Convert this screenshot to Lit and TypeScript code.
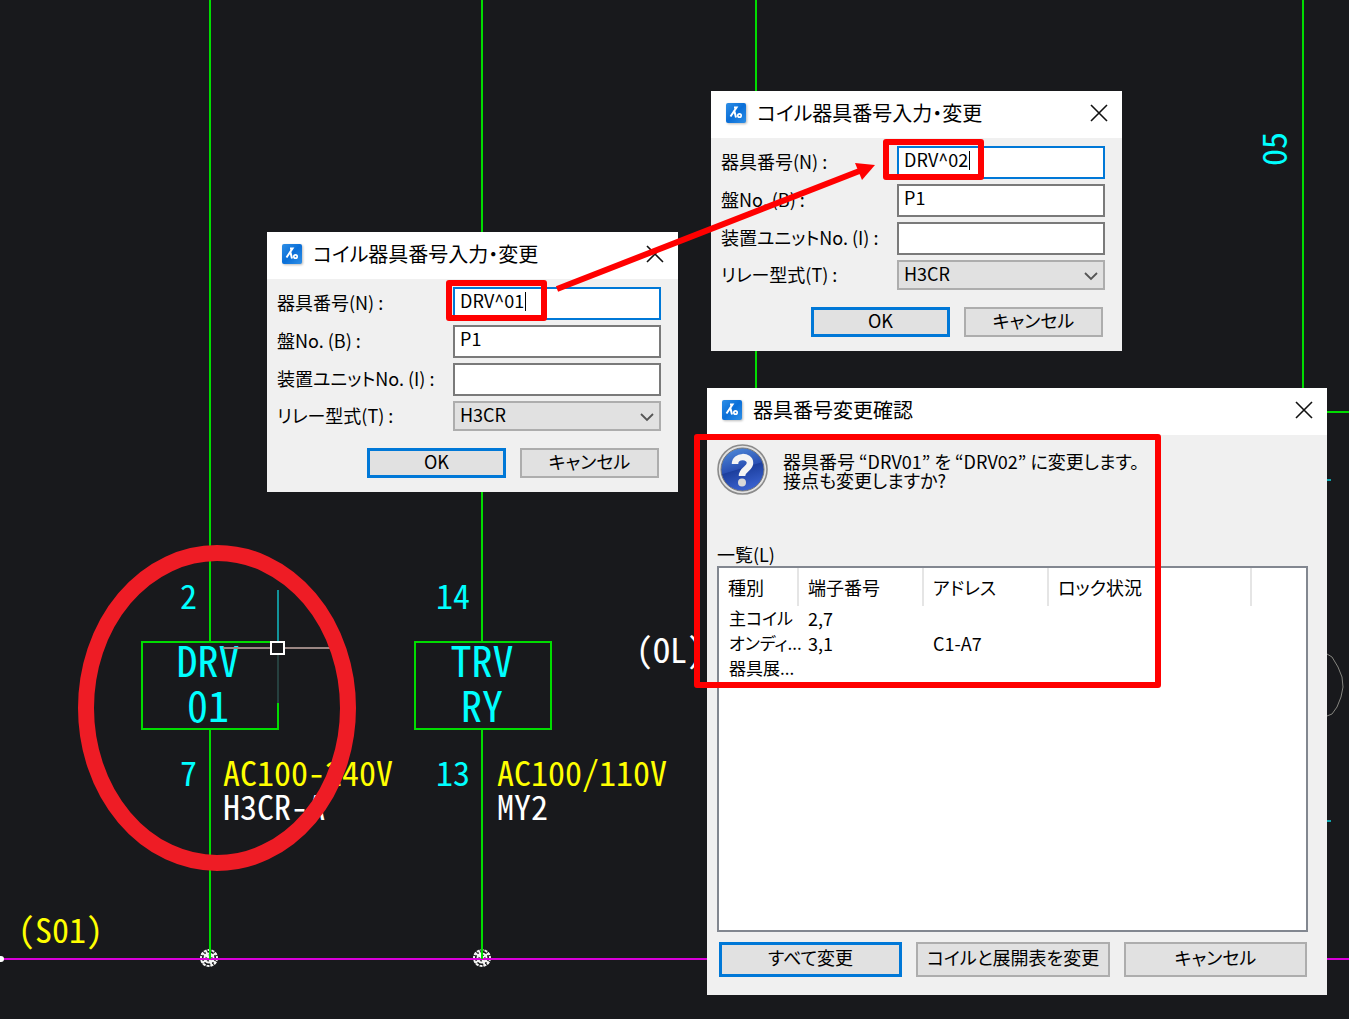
import { LitElement, html, svg, css } from "lit";
import { customElement, property } from "lit/decorators.js";

const FONT = css`"Noto Sans CJK JP", "Liberation Sans", sans-serif`;

const appIcon = html`<svg class="app-icon" viewBox="0 0 20 20" aria-hidden="true">
  <defs>
    <linearGradient id="g" x1="0" y1="0" x2="1" y2="1">
      <stop offset="0" stop-color="#2f8fe6" />
      <stop offset="0.5" stop-color="#0a6fd8" />
      <stop offset="1" stop-color="#2f8fe6" />
    </linearGradient>
  </defs>
  <rect width="20" height="20" rx="2" fill="url(#g)" />
  <path d="M8 4.5 H10.5 L4.5 13.5 M8.5 8.5 L10 14.5" fill="none" stroke="#fff" stroke-width="2" />
  <circle cx="13.5" cy="12.5" r="1.7" fill="none" stroke="#fff" stroke-width="1.7" />
</svg>`;

@customElement("dialog-window")
export class DialogWindow extends LitElement {
  @property() heading = "";

  static styles = css`
    :host {
      display: flex;
      flex-direction: column;
      box-sizing: border-box;
      background: #f0f0f0;
      color: #000;
      font-family: ${FONT};
      font-feature-settings: "palt";
    }
    .title-bar {
      display: flex;
      align-items: center;
      gap: 11px;
      height: 47px;
      flex: none;
      padding: 0 14px 3px 15px;
      box-sizing: border-box;
      background: #fff;
    }
    .app-icon {
      width: 20px;
      height: 20px;
      flex: none;
      filter: drop-shadow(1px 1px 1px #bbb);
    }
    .heading {
      flex: 1;
      margin: 0;
      font-size: 20px;
      font-weight: 400;
      line-height: 28px;
      white-space: nowrap;
    }
    .close {
      display: flex;
      border: 0;
      padding: 0;
      background: none;
    }
    .close svg {
      width: 18px;
      height: 18px;
    }
  `;

  render() {
    return html`
      <header class="title-bar">
        ${appIcon}
        <h2 class="heading">${this.heading}</h2>
        <button class="close" aria-label="閉じる">
          <svg viewBox="0 0 18 18">
            <path d="M1 1 L17 17 M17 1 L1 17" stroke="#111" stroke-width="1.6" />
          </svg>
        </button>
      </header>
      <slot></slot>
    `;
  }
}

const buttonStyles = css`
  .button {
    box-sizing: border-box;
    border: 2px solid #adadad;
    padding: 0 0 5px;
    background: #e1e1e1;
    color: #000;
    font: inherit;
    font-feature-settings: inherit;
    font-size: 18px;
    line-height: 20px;
    white-space: nowrap;
  }
  .button.default {
    border: 3px solid #0078d7;
  }
`;

@customElement("coil-dialog")
export class CoilDialog extends LitElement {
  @property() number = "";

  static styles = [
    buttonStyles,
    css`
      :host {
        display: block;
        font-family: ${FONT};
      }
      .form {
        display: flex;
        flex-direction: column;
        gap: 17px;
        padding: 8px 17px 14px 10px;
      }
      .fields {
        display: grid;
        grid-template-columns: 1fr 208px;
        grid-template-rows: repeat(3, 33px) 30px;
        gap: 5px 0;
        align-items: stretch;
      }
      .label {
        align-self: center;
        padding-bottom: 3px;
        font-size: 18px;
        line-height: 24px;
        white-space: nowrap;
      }
      .field {
        box-sizing: border-box;
        width: 100%;
        min-width: 0;
        border: 2px solid #7a7a7a;
        border-radius: 0;
        padding: 0 5px 7px;
        background: #fff;
        color: #000;
        font: inherit;
        font-feature-settings: inherit;
        font-size: 18px;
        line-height: 22px;
        outline: none;
      }
      .field.active {
        border-color: #0078d7;
      }
      .picker {
        position: relative;
        display: flex;
      }
      .select {
        appearance: none;
        border-color: #adadad;
        padding: 0 5px 4px;
        background: #e1e1e1;
      }
      .chevron {
        position: absolute;
        right: 6px;
        top: 11px;
        width: 16px;
        height: 10px;
        pointer-events: none;
      }
      .actions {
        display: grid;
        grid-template-columns: 139px 139px;
        gap: 14px;
        justify-content: end;
        padding-right: 2px;
      }
      .button {
        height: 30px;
      }
    `,
  ];

  render() {
    return html`
      <dialog-window heading="コイル器具番号入力・変更">
        <form class="form" @submit=${(e: Event) => e.preventDefault()}>
          <div class="fields">
            <label class="label" for="number">器具番号(N) :</label>
            <input class="field active" id="number" .value=${this.number} />
            <label class="label" for="board">盤No. (B) :</label>
            <input class="field" id="board" .value=${"P1"} />
            <label class="label" for="unit">装置ユニットNo. (I) :</label>
            <input class="field" id="unit" />
            <label class="label" for="relay">リレー型式(T) :</label>
            <div class="picker">
              <select class="field select" id="relay">
                <option>H3CR</option>
              </select>
              <svg class="chevron" viewBox="0 0 16 10" aria-hidden="true">
                <path d="M2 2 L8 8 L14 2" fill="none" stroke="#555" stroke-width="1.8" />
              </svg>
            </div>
          </div>
          <div class="actions">
            <button class="button default">OK</button>
            <button class="button" type="button">キャンセル</button>
          </div>
        </form>
      </dialog-window>
    `;
  }
}

const ROWS = [
  ["主コイル", "2,7", "", ""],
  ["オンディ...", "3,1", "C1-A7", ""],
  ["器具展...", "", "", ""],
];

@customElement("confirm-dialog")
export class ConfirmDialog extends LitElement {
  static styles = [
    buttonStyles,
    css`
      :host {
        display: block;
        font-family: ${FONT};
      }
      .body {
        display: flex;
        flex-direction: column;
        padding: 9px 19px 18px 10px;
      }
      .message {
        display: flex;
        gap: 15px;
        height: 98px;
      }
      .question {
        width: 51px;
        height: 51px;
        flex: none;
      }
      .text {
        margin: 0;
        padding-top: 8px;
        font-size: 18px;
        line-height: 19px;
        white-space: nowrap;
      }
      .caption {
        font-size: 18px;
        line-height: 24px;
      }
      .list {
        box-sizing: border-box;
        height: 366px;
        border: 2px solid #828790;
        background: #fff;
      }
      .table {
        width: 100%;
        table-layout: fixed;
        border-collapse: collapse;
        font-size: 18px;
        line-height: 24px;
      }
      .kind {
        width: 79px;
      }
      .terminal,
      .address {
        width: 125px;
      }
      .lock {
        width: 203px;
      }
      .table th {
        height: 38px;
        box-sizing: border-box;
        padding: 0 0 0 9px;
        border-right: 2px solid #e5e5e5;
        font-weight: 400;
        text-align: left;
        white-space: nowrap;
      }
      .table th:last-child {
        border-right: 0;
      }
      .table td {
        height: 25px;
        box-sizing: border-box;
        padding: 0 0 1px 10px;
        white-space: nowrap;
      }
      .table td:first-child {
        font-size: 17px;
      }
      .actions {
        display: grid;
        grid-template-columns: 183fr 194fr 183fr;
        gap: 14px;
        padding: 10px 1px 0 2px;
      }
      .button {
        height: 35px;
      }
    `,
  ];

  render() {
    return html`
      <dialog-window heading="器具番号変更確認">
        <div class="body">
          <div class="message">
            <svg class="question" viewBox="0 0 51 51" aria-hidden="true">
              <defs>
                <linearGradient id="ball" x1="0.2" y1="0" x2="0.5" y2="1">
                  <stop offset="0" stop-color="#4f8ad8" />
                  <stop offset="0.5" stop-color="#2a50b4" />
                  <stop offset="0.52" stop-color="#1d3f9e" />
                  <stop offset="1" stop-color="#3a62d0" />
                </linearGradient>
              </defs>
              <circle cx="25.5" cy="25.5" r="24.5" fill="#e2e2e2" stroke="#8b8b8b" stroke-width="1.6" />
              <circle cx="25.5" cy="25.5" r="21.5" fill="url(#ball)" stroke="#777" stroke-width="1" />
              <path d="M18 20 C18 11 33 11 33 19 C33 25 25 25 25 32" fill="none" stroke="#f4f4f4" stroke-width="6.5" />
              <circle cx="25" cy="38.5" r="4" fill="#d8d8d8" />
            </svg>
            <p class="text">器具番号 “DRV01” を “DRV02” に変更します。<br />接点も変更しますか?</p>
          </div>
          <div class="caption" id="caption">一覧(L)</div>
          <div class="list">
            <table class="table" aria-labelledby="caption">
              <colgroup>
                <col class="kind" />
                <col class="terminal" />
                <col class="address" />
                <col class="lock" />
                <col />
              </colgroup>
              <thead>
                <tr>
                  <th>種別</th>
                  <th>端子番号</th>
                  <th>アドレス</th>
                  <th>ロック状況</th>
                  <th></th>
                </tr>
              </thead>
              <tbody>
                ${ROWS.map((row) => html`<tr>${row.map((cell) => html`<td>${cell}</td>`)}<td></td></tr>`)}
              </tbody>
            </table>
          </div>
          <div class="actions">
            <button class="button default">すべて変更</button>
            <button class="button">コイルと展開表を変更</button>
            <button class="button">キャンセル</button>
          </div>
        </div>
      </dialog-window>
    `;
  }
}

const junction = (x: number) => svg`
  <circle cx=${x} cy="958" r="8" class="joint rim" />
  <circle cx=${x} cy="958" r="4.5" class="joint" />
  <path d="M${x - 7} 953 L${x + 7} 963 M${x + 7} 953 L${x - 7} 963 M${x - 3} 951 L${x + 3} 966" class="joint" />`;

@customElement("app-root")
export class AppRoot extends LitElement {
  static styles = css`
    :host {
      display: block;
      position: relative;
      min-height: 100vh;
      overflow: hidden;
      background: #18191c;
      font-family: ${FONT};
    }
    .drawing,
    .marks {
      position: absolute;
      inset: 0;
      width: 100%;
      height: 100%;
    }
    .marks {
      pointer-events: none;
    }
    .window {
      position: absolute;
    }
    .before {
      left: 267px;
      top: 232px;
      width: 411px;
    }
    .after {
      left: 711px;
      top: 91px;
      width: 411px;
    }
    .confirm {
      left: 707px;
      top: 388px;
      width: 620px;
    }
    .wire {
      fill: none;
      stroke: #00dc00;
      stroke-width: 2;
    }
    .bus {
      stroke: #d800d8;
      stroke-width: 2;
    }
    .joint {
      fill: none;
      stroke: #f4f4f4;
      stroke-width: 2;
    }
    .rim {
      stroke-dasharray: 3 1;
    }
    .cad {
      font-size: 34px;
      font-feature-settings: "hwid";
    }
    .big {
      font-size: 42px;
      text-anchor: middle;
    }
    .cyan {
      fill: #00ffff;
    }
    .yellow {
      fill: #ffff00;
    }
    .white {
      fill: #ffffff;
    }
    .end {
      text-anchor: end;
    }
    .red {
      fill: none;
      stroke: #ff0000;
      stroke-width: 6;
      stroke-linejoin: round;
    }
  `;

  render() {
    return html`
      <svg class="drawing">
        ${junction(209)}${junction(482)}
        <path class="bus" d="M0 959 H1349" />
        <circle cx="1" cy="959" r="3" fill="#fff" />
        <path class="wire" d="M210 0 V642 M210 730 V959 M482 0 V642 M482 730 V959 M756 0 V388 M1303 0 V388 M1327 412 H1349" />
        <path class="wire" d="M271 642 H142 V729 H278 V703" />
        <rect class="wire" x="415" y="642" width="136" height="87" />
        <g class="cad">
          <text class="cyan end" x="197" y="609">2</text>
          <text class="cyan end" x="197" y="786">7</text>
          <text class="cyan end" x="470" y="609">14</text>
          <text class="cyan end" x="470" y="786">13</text>
          <text class="cyan big" x="208" y="677">DRV</text>
          <text class="cyan big" x="208" y="722">01</text>
          <text class="cyan big" x="482" y="677">TRV</text>
          <text class="cyan big" x="482" y="722">RY</text>
          <text class="yellow" x="223" y="786">AC100-240V</text>
          <text class="yellow" x="497" y="786">AC100/110V</text>
          <text class="white" x="223" y="820">H3CR-A</text>
          <text class="white" x="497" y="820">MY2</text>
          <text class="white" x="636" y="663">(OL)</text>
          <text class="yellow" x="18" y="943">(S01)</text>
          <text class="cyan" transform="translate(1287 166) rotate(-90)">05</text>
        </g>
        <path d="M278 590 V641" stroke="#12939a" stroke-width="2" />
        <path d="M278 655 V703" stroke="#26403f" stroke-width="2" />
        <path d="M223 648 H271 M284 648 H330" stroke="#9a8683" stroke-width="2" />
        <rect x="271" y="642" width="13" height="12" fill="none" stroke="#fff" stroke-width="2" />
        <path d="M1327 654 L1332 657 L1338 667 L1342 677 L1343 687 L1341 697 L1337 707 L1332 714 L1327 716" fill="none" stroke="#85857f" stroke-width="1" />
        <path d="M1327 480 H1331 M1327 821 H1331" stroke="#11a5ad" stroke-width="2" />
      </svg>

      <coil-dialog class="window before" number="DRV^01"></coil-dialog>
      <coil-dialog class="window after" number="DRV^02"></coil-dialog>
      <confirm-dialog class="window confirm"></confirm-dialog>

      <svg class="marks" aria-hidden="true">
        <path d="M525.5 292 V311 M969.5 151 V170" stroke="#000" stroke-width="1" />
        <ellipse cx="217" cy="708" rx="131" ry="155" fill="none" stroke="#ee1c25" stroke-width="16" />
        <rect class="red" x="449" y="283" width="95" height="35" />
        <rect class="red" x="886" y="142" width="95" height="35" />
        <rect class="red" x="697" y="437" width="461" height="248" />
        <path class="red" d="M557 289 L862 170" />
        <path d="M855 163 L875 165 L862 180 Z" fill="#ff0000" />
      </svg>
    `;
  }
}
